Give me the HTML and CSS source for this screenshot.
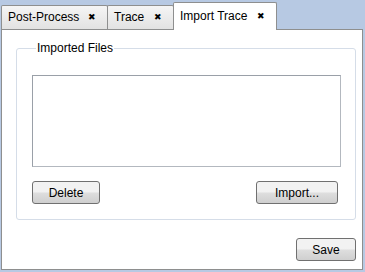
FILE: index.html
```html
<!DOCTYPE html>
<html lang="en">

<head>
    <meta charset="UTF-8">
    <title>Import Trace</title>
    <link rel="stylesheet" href="styles.css">
</head>

<body>
    <div class="window">
        <div class="tabs">
            <div class="tab tab-post">Post-Process <span class="close">&#10006;</span></div>
            <div class="tab tab-trace">Trace <span class="close">&#10006;</span></div>
            <div class="tab tab-import active">Import Trace <span class="close">&#10006;</span></div>
        </div>
        <div class="panel">
            <fieldset class="group">
                <legend>Imported Files</legend>
                <div class="list"></div>
                <div class="row">
                    <button class="btn delete">Delete</button>
                    <button class="btn import">Import...</button>
                </div>
            </fieldset>
            <div class="footer">
                <button class="btn save">Save</button>
            </div>
        </div>
    </div>
</body>

</html>
```

FILE: styles.css
```css
* {
    margin: 0;
    padding: 0;
    box-sizing: border-box;
}

body {
    font-family: "Liberation Sans", Arial, sans-serif;
    font-size: 12px;
    color: #000;
    background: #b7c9e3;
}

.window {
    width: 365px;
    height: 272px;
    display: flex;
    flex-direction: column;
}

.tabs {
    display: flex;
    align-items: flex-end;
    height: 29px;
    padding-left: 1px;
}

.tab {
    display: flex;
    justify-content: space-between;
    height: 24px;
    line-height: 22px;
    padding: 0 11px 0 6px;
    border: 1px solid #8e8f8f;
    border-bottom: none;
    border-radius: 2px 2px 0 0;
    background: linear-gradient(#f5f5f5, #e2e2e2);
    margin-right: -1px;
    white-space: nowrap;
}

.tab-post {
    width: 107px;
}

.tab-trace {
    width: 67px;
}

.tab-import {
    width: 104px;
}

.tab.active {
    height: 28px;
    line-height: 26px;
    background: #fff;
    position: relative;
    margin-bottom: -1px;
    z-index: 1;
}

.close {
    font-size: 9px;
}

.panel {
    flex: 1;
    background: #fff;
    border: 1px solid #8e8f8f;
    margin: 0 2px 2px 1px;
    padding: 11px 6px 8px 14px;
    display: flex;
    flex-direction: column;
}

.group {
    border: 1px solid #d5dde8;
    border-radius: 3px;
    height: 179px;
    padding: 20px 14px 0 15px;
}

.group legend {
    margin-left: 4px;
    padding: 0 1px;
}

.list {
    height: 92px;
    border: 1px solid #9aa0a8;
    border-right-color: #b3b8bf;
    border-bottom-color: #b3b8bf;
}

.row {
    display: flex;
    justify-content: space-between;
    margin-top: 14px;
    padding-right: 3px;
}

.btn {
    font-family: inherit;
    font-size: 12px;
    height: 23px;
    border: 1px solid #707070;
    border-radius: 3px;
    background: linear-gradient(#f2f2f2 45%, #dddddd 55%, #cfcfcf);
    color: #000;
}

.delete {
    width: 68px;
}

.import {
    width: 82px;
}

.footer {
    display: flex;
    justify-content: flex-end;
    margin-top: auto;
}

.save {
    width: 60px;
}
```
